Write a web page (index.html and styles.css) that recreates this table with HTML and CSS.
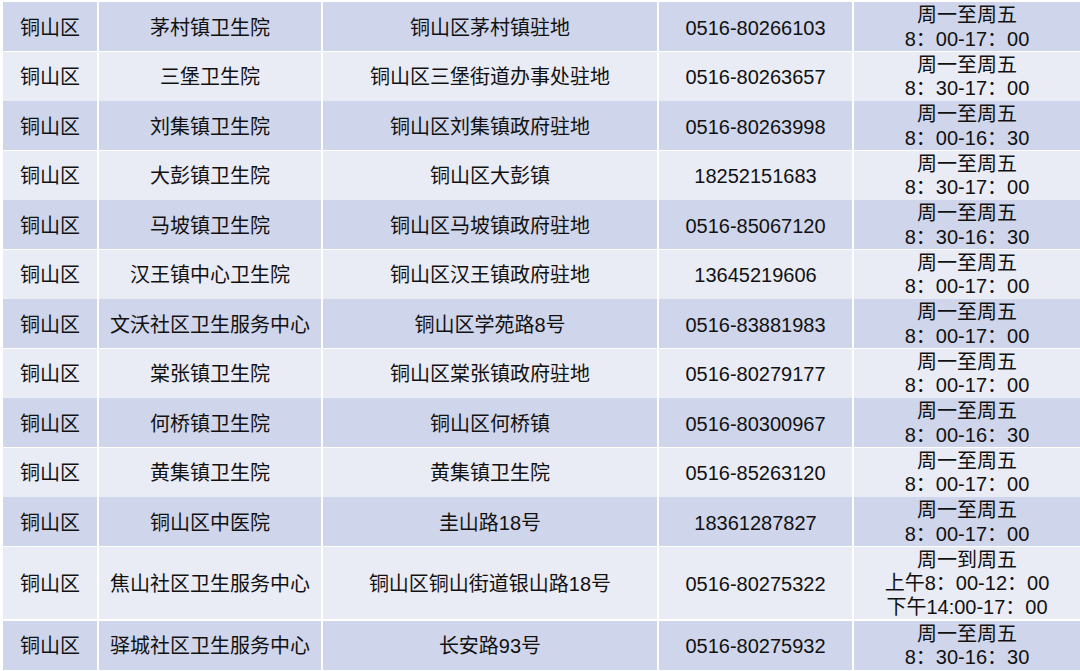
FILE: index.html
```html
<!DOCTYPE html>
<html lang="zh">
<head>
<meta charset="utf-8">
<title>铜山区</title>
<link rel="stylesheet" href="styles.css">
</head>
<body>
<div class="table">
  <div class="row dark"><div class="cell">铜山区</div><div class="cell">茅村镇卫生院</div><div class="cell">铜山区茅村镇驻地</div><div class="cell">0516-80266103</div><div class="cell time">周一至周五<br>8：00-17：00</div></div>
  <div class="row light"><div class="cell">铜山区</div><div class="cell">三堡卫生院</div><div class="cell">铜山区三堡街道办事处驻地</div><div class="cell">0516-80263657</div><div class="cell time">周一至周五<br>8：30-17：00</div></div>
  <div class="row dark"><div class="cell">铜山区</div><div class="cell">刘集镇卫生院</div><div class="cell">铜山区刘集镇政府驻地</div><div class="cell">0516-80263998</div><div class="cell time">周一至周五<br>8：00-16：30</div></div>
  <div class="row light"><div class="cell">铜山区</div><div class="cell">大彭镇卫生院</div><div class="cell">铜山区大彭镇</div><div class="cell">18252151683</div><div class="cell time">周一至周五<br>8：30-17：00</div></div>
  <div class="row dark"><div class="cell">铜山区</div><div class="cell">马坡镇卫生院</div><div class="cell">铜山区马坡镇政府驻地</div><div class="cell">0516-85067120</div><div class="cell time">周一至周五<br>8：30-16：30</div></div>
  <div class="row light"><div class="cell">铜山区</div><div class="cell">汉王镇中心卫生院</div><div class="cell">铜山区汉王镇政府驻地</div><div class="cell">13645219606</div><div class="cell time">周一至周五<br>8：00-17：00</div></div>
  <div class="row dark"><div class="cell">铜山区</div><div class="cell">文沃社区卫生服务中心</div><div class="cell">铜山区学苑路8号</div><div class="cell">0516-83881983</div><div class="cell time">周一至周五<br>8：00-17：00</div></div>
  <div class="row light"><div class="cell">铜山区</div><div class="cell">棠张镇卫生院</div><div class="cell">铜山区棠张镇政府驻地</div><div class="cell">0516-80279177</div><div class="cell time">周一至周五<br>8：00-17：00</div></div>
  <div class="row dark"><div class="cell">铜山区</div><div class="cell">何桥镇卫生院</div><div class="cell">铜山区何桥镇</div><div class="cell">0516-80300967</div><div class="cell time">周一至周五<br>8：00-16：30</div></div>
  <div class="row light"><div class="cell">铜山区</div><div class="cell">黄集镇卫生院</div><div class="cell">黄集镇卫生院</div><div class="cell">0516-85263120</div><div class="cell time">周一至周五<br>8：00-17：00</div></div>
  <div class="row dark"><div class="cell">铜山区</div><div class="cell">铜山区中医院</div><div class="cell">圭山路18号</div><div class="cell">18361287827</div><div class="cell time">周一至周五<br>8：00-17：00</div></div>
  <div class="row light tall"><div class="cell">铜山区</div><div class="cell">焦山社区卫生服务中心</div><div class="cell">铜山区铜山街道银山路18号</div><div class="cell">0516-80275322</div><div class="cell time">周一到周五<br>上午8：00-12：00<br>下午14:00-17：00</div></div>
  <div class="row dark"><div class="cell">铜山区</div><div class="cell">驿城社区卫生服务中心</div><div class="cell">长安路93号</div><div class="cell">0516-80275932</div><div class="cell time">周一至周五<br>8：30-16：30</div></div>
</div>
</body>
</html>
```
FILE: styles.css
```css
html, body {
  margin: 0;
  padding: 0;
  background: #ffffff;
}
body {
  width: 1080px;
  height: 671px;
  overflow: hidden;
  font-family: "Liberation Sans", "Noto Sans CJK SC", sans-serif;
  font-size: 20px;
  color: #111111;
}
.table {
  display: flex;
  flex-direction: column;
  gap: 2px;
  padding: 2px 0 0 3px;
}
.row {
  display: grid;
  grid-template-columns: 94px 222px 334px 193px 1fr;
  column-gap: 2px;
  height: 47.5px;
}
.row.tall {
  height: 72px;
}
.dark .cell {
  background: #cfd5ea;
}
.light .cell {
  background: #e9ebf5;
}
.cell {
  display: flex;
  align-items: center;
  justify-content: center;
  text-align: center;
  line-height: 23.5px;
  white-space: nowrap;
  padding-top: 4px;
  box-sizing: border-box;
}
.cell.time {
  padding-top: 2px;
}
```
